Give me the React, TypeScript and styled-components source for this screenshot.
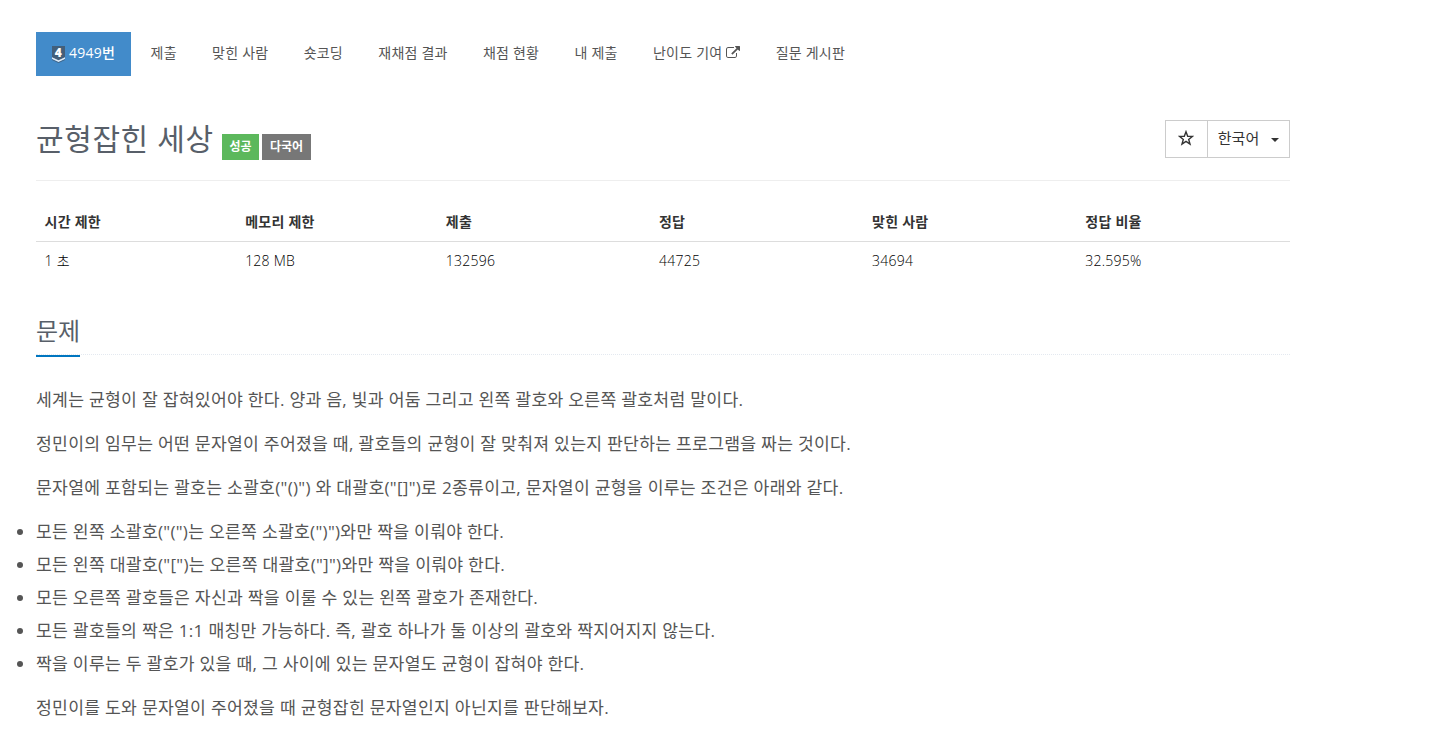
import React from 'react'
import styled, {createGlobalStyle} from 'styled-components'

const colors = {
    text: '#555',
    dark: '#333',
    blue: '#428bca',
    accent: '#0076c0',
    green: '#5cb85c',
    gray: '#777',
    line: '#ddd',
}

const menu = ['제출', '맞힌 사람', '숏코딩', '재채점 결과', '채점 현황', '내 제출', '난이도 기여', '질문 게시판']

const stats = [
    {title: '시간 제한', value: '1 초', width: 16},
    {title: '메모리 제한', value: '128 MB', width: 16},
    {title: '제출', value: '132596', width: 17},
    {title: '정답', value: '44725', width: 17},
    {title: '맞힌 사람', value: '34694', width: 17},
    {title: '정답 비율', value: '32.595%', width: 17},
]

const paragraphs = [
    '세계는 균형이 잘 잡혀있어야 한다. 양과 음, 빛과 어둠 그리고 왼쪽 괄호와 오른쪽 괄호처럼 말이다.',
    '정민이의 임무는 어떤 문자열이 주어졌을 때, 괄호들의 균형이 잘 맞춰져 있는지 판단하는 프로그램을 짜는 것이다.',
    '문자열에 포함되는 괄호는 소괄호("()") 와 대괄호("[]")로 2종류이고, 문자열이 균형을 이루는 조건은 아래와 같다.',
]

const rules = [
    '모든 왼쪽 소괄호("(")는 오른쪽 소괄호(")")와만 짝을 이뤄야 한다.',
    '모든 왼쪽 대괄호("[")는 오른쪽 대괄호("]")와만 짝을 이뤄야 한다.',
    '모든 오른쪽 괄호들은 자신과 짝을 이룰 수 있는 왼쪽 괄호가 존재한다.',
    '모든 괄호들의 짝은 1:1 매칭만 가능하다. 즉, 괄호 하나가 둘 이상의 괄호와 짝지어지지 않는다.',
    '짝을 이루는 두 괄호가 있을 때, 그 사이에 있는 문자열도 균형이 잡혀야 한다.',
]

const TierBadge = () => (
    <TierSvg viewBox="0 0 14 18">
        <path d="M0.500 1h13v11.500L7 15.500 0.500 12.500z" fill="#435f7a"/>
        <path d="M0.500 12.200L7 15.200l6.500-3v1.700L7 17 0.500 13.900z" fill="#dfe9f2"/>
        <path d="M0.500 14.200L7 17.200l6.500-3v.8L7 18 0.500 15z" fill="#435f7a"/>
        <text x="7" y="11.500" textAnchor="middle" fontSize="12" fontWeight="800" fill="#fff">4</text>
    </TierSvg>
)

const ExternalLink = () => (
    <LinkSvg viewBox="0 0 1792 1792">
        <path d="M1408 928v320q0 119-84.500 203.500t-203.500 84.500h-832q-119 0-203.500-84.500t-84.500-203.500v-832q0-119 84.500-203.500t203.500-84.500h704q14 0 23 9t9 23v64q0 14-9 23t-23 9h-704q-66 0-113 47t-47 113v832q0 66 47 113t113 47h832q66 0 113-47t47-113v-320q0-14 9-23t23-9h64q14 0 23 9t9 23zm384-864v512q0 26-19 45t-45 19-45-19l-176-176-652 652q-10 10-23 10t-23-10l-114-114q-10-10-10-23t10-23l652-652-176-176q-19-19-19-45t19-45 45-19h512q26 0 45 19t19 45z"/>
    </LinkSvg>
)

const StarIcon = () => (
    <StarSvg viewBox="0 0 16 16">
        <path d="M8 1.700l1.700 4.500 4.800.2-3.800 3 1.300 4.600L8 11.300l-4 2.700 1.300-4.600-3.800-3 4.800-.2z"/>
    </StarSvg>
)

const App = () => {
    return (
        <Page>
            <GlobalStyle/>
            <Nav>
                <NavItem $active><TierBadge/>4949번</NavItem>
                {menu.map(m => (
                    <NavItem key={m}>{m}{m === '난이도 기여' && <ExternalLink/>}</NavItem>
                ))}
            </Nav>
            <Header>
                <Title>균형잡힌 세상</Title>
                <Label $color={colors.green} $width={37}>성공</Label>
                <Label $color={colors.gray} $width={49}>다국어</Label>
                <ButtonGroup>
                    <Button $width={41}><StarIcon/></Button>
                    <Button $width={82}>한국어<Caret/></Button>
                </ButtonGroup>
            </Header>
            <Table>
                <thead>
                <tr>{stats.map(s => <Th key={s.title} $width={s.width}>{s.title}</Th>)}</tr>
                </thead>
                <tbody>
                <tr>{stats.map(s => <Td key={s.title}>{s.value}</Td>)}</tr>
                </tbody>
            </Table>
            <Headline><HeadlineText>문제</HeadlineText></Headline>
            <Description>
                {paragraphs.map(p => <Paragraph key={p}>{p}</Paragraph>)}
                <List>
                    {rules.map(r => <li key={r}>{r}</li>)}
                </List>
                <Paragraph>정민이를 도와 문자열이 주어졌을 때 균형잡힌 문자열인지 아닌지를 판단해보자.</Paragraph>
            </Description>
        </Page>
    )
}

export default App

const GlobalStyle = createGlobalStyle`
  * {
    box-sizing: border-box;
  }

  body {
    margin: 0;
    background: #fff;
    color: ${colors.dark};
    font-family: "Open Sans", "Noto Sans CJK KR", sans-serif;
    font-size: 14px;
    overflow: hidden;
  }
`
const Page = styled.div`
  width: 1254px;
  margin-left: 36px;
  padding-top: 32px;
`
const Nav = styled.nav`
  display: flex;
  gap: 5.3px;
  height: 44px;
`
const NavItem = styled.a<{ $active?: boolean }>`
  display: flex;
  align-items: center;
  padding: 0 15px 2px;
  margin-right: ${({$active}) => $active ? '-0.7px' : 0};
  min-width: ${({$active}) => $active ? '95px' : 0};
  white-space: pre;
  font-size: 14px;
  line-height: 20px;
  letter-spacing: 0.22px;
  color: ${({$active}) => $active ? '#fff' : colors.text};
  background: ${({$active}) => $active ? colors.blue : 'transparent'};
  font-weight: ${({$active}) => $active ? 500 : 400};
`
const TierSvg = styled.svg`
  width: 15px;
  height: 18px;
  margin: 2px 3px 0 0;
`
const LinkSvg = styled.svg`
  width: 14px;
  height: 14px;
  margin-left: 4px;
  fill: ${colors.text};
`
const Header = styled.header`
  display: flex;
  align-items: flex-start;
  height: 105px;
  padding-top: 44px;
  border-bottom: 1px solid #eee;
`
const Title = styled.h1`
  width: 177px;
  margin: 0 9px 0 0;
  white-space: nowrap;
  font-size: 30px;
  font-weight: 400;
  line-height: 37px;
  letter-spacing: 0.6px;
  color: #585f69;
`
const Label = styled.span<{ $color: string, $width: number }>`
  width: ${({$width}) => $width}px;
  height: 26px;
  margin: 14px 3px 0 0;
  background: ${({$color}) => $color};
  color: #fff;
  font-size: 12px;
  font-weight: 600;
  line-height: 25px;
  text-align: center;
`
const ButtonGroup = styled.div`
  display: flex;
  margin-left: auto;
  border: 1px solid #ccc;
`
const Button = styled.button<{ $width: number }>`
  display: flex;
  align-items: center;
  justify-content: center;
  width: ${({$width}) => $width}px;
  height: 36px;
  padding: 0 0 3px;
  border: 0;
  background: #fff;
  color: ${colors.dark};
  font-family: inherit;
  font-size: 15px;

  & + & {
    border-left: 1px solid #ccc;
  }
`
const StarSvg = styled.svg`
  width: 16px;
  height: 16px;
  margin-right: 1px;
  fill: none;
  stroke: ${colors.dark};
  stroke-width: 1.4;
`
const Caret = styled.span`
  margin: 5px 0 0 12px;
  border-top: 4px solid ${colors.dark};
  border-left: 4px solid transparent;
  border-right: 4px solid transparent;
`
const Table = styled.table`
  width: 100%;
  margin-top: 20px;
  border-collapse: collapse;
  table-layout: fixed;
  letter-spacing: 0.25px;
`
const Th = styled.th<{ $width: number }>`
  width: ${({$width}) => $width}%;
  height: 40px;
  padding: 2px 8px 0 8.5px;
  border-bottom: 1px solid ${colors.line};
  line-height: 20px;
  font-weight: 600;
  text-align: left;
`
const Td = styled.td`
  height: 38px;
  padding: 2px 8px 0 8.5px;
  line-height: 20px;
  font-weight: 300;
  color: #000;
`
const Headline = styled.div`
  display: flex;
  height: 43px;
  margin-top: 33px;
  border-bottom: 1px dotted #e4e9f0;
`
const HeadlineText = styled.h2`
  height: 45px;
  margin: 0;
  border-bottom: 2px solid ${colors.accent};
  color: #585f69;
  font-size: 24px;
  font-weight: 400;
  line-height: 38px;
`
const Description = styled.div`
  margin-top: 28px;
  color: ${colors.text};
  font-size: 17.2px;
  line-height: 33px;
  letter-spacing: 0.26px;
`
const Paragraph = styled.p`
  margin: 0 0 11px;
`
const List = styled.ul`
  margin: 0 0 11px;
  padding: 0;
`
